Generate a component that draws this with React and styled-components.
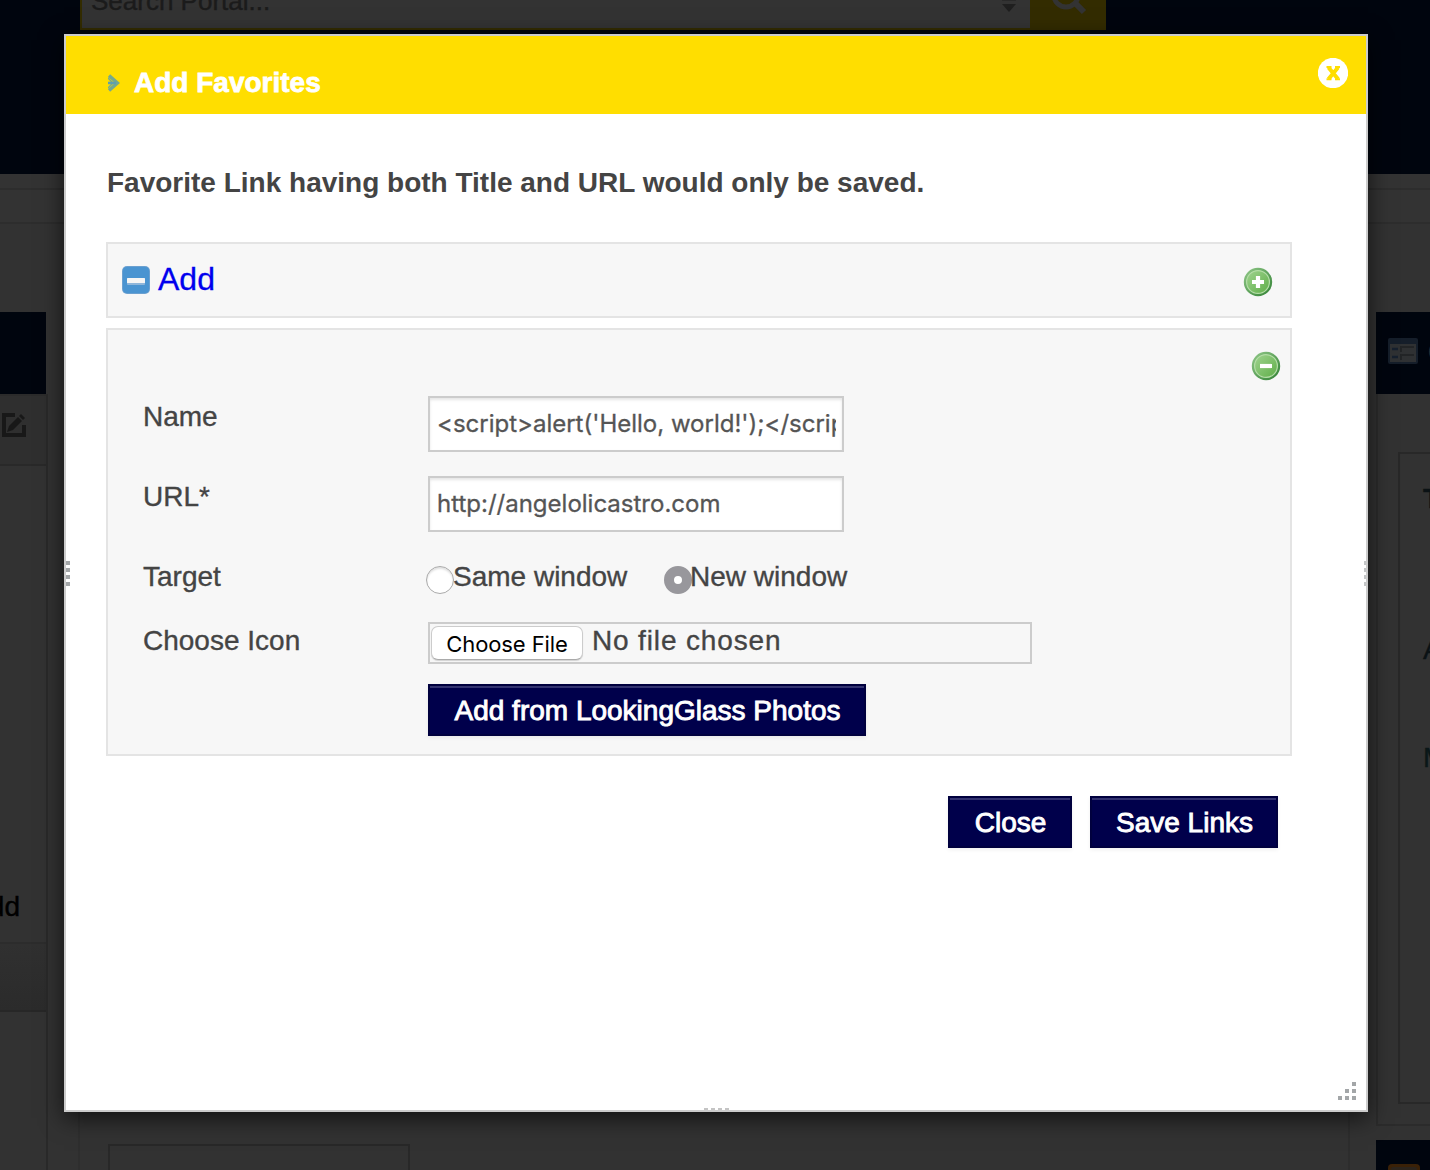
import React from "react";
import styled, { createGlobalStyle } from "styled-components";

const Global = createGlobalStyle`
  * { box-sizing: border-box; }
  body { margin: 0; background: #333; }
  input, button { font: inherit; margin: 0; }
`;

const Page = styled.div`
  position: relative;
  width: 1430px;
  height: 1170px;
  overflow: hidden;
  background: #323232;
  font-family: "Liberation Sans", Arial, sans-serif;
  font-size: 28px;
  color: #444;
`;

/* ---------- dimmed portal ---------- */
const Portal = styled.div`
  display: flex;
  flex-direction: column;
  height: 1170px;
`;
const TopBar = styled.header`
  height: 174px;
  flex: none;
  background: #00050e;
  padding-left: 80px;
  display: flex;
  align-items: flex-start;
`;
const SearchField = styled.div`
  width: 950px;
  height: 30px;
  border: 2px solid #332c00;
  border-top: 0;
  border-right: 0;
  background: #333;
  display: flex;
  justify-content: space-between;
  padding: 0 13px 0 9px;
  color: #1b1b1b;
  span {
    line-height: 32px;
    margin-top: -15px;
    font-size: 26px;
    -webkit-text-stroke: 0.4px #1b1b1b;
  }
  svg { margin-top: 0; }
`;
const SearchButton = styled.div`
  width: 76px;
  height: 30px;
  background: #332c00;
  padding-left: 22px;
  overflow: hidden;
  svg { display: block; margin-top: -22px; }
`;
const Strip = styled.div`
  height: ${(p) => p.h}px;
  flex: none;
  background: ${(p) => p.bg};
  border-bottom: 2px solid #2d2d2d;
`;
const Columns = styled.div`
  flex: 1;
  display: flex;
  min-height: 0;
`;
const LeftColumn = styled.aside`
  width: 48px;
  padding-top: 88px;
  display: flex;
  flex-direction: column;
`;
const LeftHead = styled.div`
  width: 46px;
  height: 82px;
  flex: none;
  background: #00050e;
`;
const LeftCard = styled.div`
  flex: 1;
  border-right: 2px solid #292929;
  border-top: 2px solid #2b2b2b;
  display: flex;
  flex-direction: column;
`;
const EditCell = styled.div`
  height: 70px;
  padding: 17px 0 0 1px;
  background: #2f2f2f;
  border-bottom: 2px solid #292929;
  svg { display: block; }
`;
const AddCell = styled.div`
  height: 478px;
  display: flex;
  align-items: flex-end;
  justify-content: flex-end;
  padding: 0 26px 19px 0;
  overflow: hidden;
  color: #000;
  border-bottom: 2px solid #2c2c2c;
  line-height: 32px;
  -webkit-text-stroke: 0.4px #000;
`;
const ShadeCell = styled.div`
  height: 68px;
  background: linear-gradient(#303030, #2b2b2b);
  border-bottom: 2px solid #272727;
`;
const MiddleColumn = styled.main`
  width: 1272px;
  margin: 0 26px 0 30px;
  border-left: 2px solid #2e2e2e;
  border-right: 2px solid #2d2d2d;
  padding: 920px 0 0 28px;
`;
const MiddleBox = styled.div`
  width: 302px;
  height: 60px;
  border: 2px solid #282828;
`;
const RightColumn = styled.aside`
  width: 54px;
  padding-top: 88px;
  display: flex;
  flex-direction: column;
`;
const RightHead = styled.div`
  height: ${(p) => p.h}px;
  flex: none;
  background: #00050e;
  padding: ${(p) => p.pad};
  display: flex;
  gap: 10px;
  overflow: hidden;
  color: #333;
  font-weight: bold;
  line-height: 28px;
  svg { flex: none; }
`;
const RightCard = styled.div`
  height: 732px;
  margin-bottom: 14px;
  flex: none;
  border-left: 2px solid #2b2b2b;
  border-bottom: 2px solid #2b2b2b;
  padding: 58px 0 20px 20px;
`;
const RightInner = styled.div`
  height: 652px;
  border: 2px solid #282828;
  border-right: 0;
  padding: 27px 0 0 23px;
  overflow: hidden;
  white-space: nowrap;
`;
const Line = styled.div`
  height: ${(p) => p.h}px;
  line-height: 36px;
  font-size: 28px;
  font-weight: ${(p) => (p.bold ? "bold" : "normal")};
  color: ${(p) => p.color || "#0b1215"};
  -webkit-text-stroke: 0.4px currentColor;
`;

/* ---------- dialog ---------- */
const Dialog = styled.section`
  position: absolute;
  left: 64px;
  top: 34px;
  width: 1304px;
  height: 1078px;
  background: #fff;
  border: 2px solid #ccc;
  box-shadow: 0 6px 22px rgba(0, 0, 0, 0.65);
  display: flex;
  flex-direction: column;
`;
const Header = styled.header`
  height: 78px;
  flex: none;
  background: #ffde00;
  display: flex;
  align-items: flex-start;
  padding: 22px 18px 0 42px;
`;
const Chevron = styled.svg`
  width: 12px;
  height: 18px;
  margin-top: 16px;
`;
const Title = styled.h1`
  flex: 1;
  margin: 9px 0 0 14px;
  font-size: 28px;
  line-height: 32px;
  color: #fff;
  -webkit-text-stroke: 0.8px #fff;
`;
const Body = styled.div`
  padding: 53px 74px 0 40px;
  display: flex;
  flex-direction: column;
`;
const Notice = styled.p`
  margin: 0 0 43px;
  padding-left: 1px;
  font-size: 28px;
  line-height: 32px;
  font-weight: bold;
  white-space: nowrap;
`;
const Panel = styled.div`
  background: #f7f7f7;
  border: 2px solid #e4e4e4;
`;
const AddPanel = styled(Panel)`
  height: 76px;
  display: flex;
  justify-content: space-between;
  padding: 14px 17px 0 14px;
  margin-bottom: 10px;
  svg { display: block; margin-top: 9px; }
`;
const AddLink = styled.a`
  display: flex;
  gap: 8px;
  color: #0000ee;
  font-size: 32px;
  line-height: 42px;
  -webkit-text-stroke: 0.3px #0000ee;
  svg { margin-top: 8px; }
`;
const FormPanel = styled(Panel)`
  height: 428px;
  padding: 21px 9px 0 34px;
`;
const RemoveRow = styled.div`
  display: flex;
  justify-content: flex-end;
  height: 45px;
`;
const Row = styled.div`
  display: grid;
  grid-template-columns: 286px 1fr;
  height: ${(p) => p.h}px;
`;
const Label = styled.label`
  line-height: 32px;
  padding: ${(p) => p.pt || 0}px 0 0 1px;
  -webkit-text-stroke: 0.35px #444;
`;
const TextInput = styled.input`
  width: 416px;
  height: 56px;
  border: 2px solid #ccc;
  border-radius: 0;
  padding: 0 6px 2px ${(p) => p.inset}px;
  background: #fff;
  box-shadow: inset 0 2px 3px rgba(0, 0, 0, 0.1);
  font-family: Inter, sans-serif;
  font-size: 24px;
  color: #555;
  -webkit-text-stroke: 0.3px #555;
  outline: 0;
`;
const RadioRow = styled.div`
  display: flex;
  margin-left: -2px;
`;
const RadioOption = styled.label`
  display: flex;
  width: 238px;
  line-height: 32px;
  white-space: nowrap;
  -webkit-text-stroke: 0.35px #444;
`;
const RadioText = styled.span`
  margin: 5px 0 0 ${(p) => p.shift || 0}px;
`;
const RadioDot = styled.span`
  flex: none;
  width: 28px;
  height: 28px;
  margin: 10px -1px 0 0;
  border-radius: 50%;
  border: ${(p) => (p.on ? "10px solid #98979c" : "1px solid #aaa")};
  background: #fff;
  box-shadow: ${(p) => (p.on ? "none" : "inset 0 2px 2px rgba(0,0,0,.12)")};
`;
const FileBox = styled.div`
  width: 604px;
  height: 42px;
  border: 2px solid #ccc;
  display: flex;
  padding: 2px 1px;
`;
const FileButton = styled.span`
  width: 152px;
  height: 34px;
  border: 1px solid #ccc;
  border-bottom-color: #aaa;
  border-radius: 7px;
  background: #fff;
  box-shadow: 0 1px 1px rgba(0, 0, 0, 0.15);
  color: #000;
  font-family: Inter, sans-serif;
  font-size: 22px;
  letter-spacing: -0.1px;
  line-height: 34px;
  text-align: center;
  white-space: nowrap;
`;
const FileText = styled.span`
  margin: -1px 0 0 9px;
  line-height: 32px;
  letter-spacing: 0.85px;
  -webkit-text-stroke: 0.35px #444;
`;
const Button = styled.button`
  width: ${(p) => p.w}px;
  height: 52px;
  border: 2px solid #00003e;
  border-radius: 0;
  background: #00004b;
  box-shadow: inset 0 2px 0 #333370, 0 2px 4px rgba(0, 0, 0, 0.06);
  padding: 2px 0 0 1px;
  color: #fff;
  font-size: 28px;
  line-height: 46px;
  -webkit-text-stroke: 0.9px #fff;
  white-space: nowrap;
`;
const Actions = styled.div`
  display: flex;
  justify-content: flex-end;
  gap: 18px;
  padding: 40px 14px 0 0;
`;
const Grip = styled.svg`
  position: absolute;
  left: ${(p) => p.x}px;
  top: ${(p) => p.y}px;
`;

const RoundIcon = ({ plus }) => (
  <svg width="30" height="30" viewBox="0 0 30 30">
    <defs>
      <linearGradient id={plus ? "gp" : "gm"} x1="0" y1="0" x2="1" y2="1">
        <stop offset="0" stopColor="#93c98a" />
        <stop offset="1" stopColor="#2f8032" />
      </linearGradient>
      <linearGradient id={plus ? "ip" : "im"} x1="0" y1="0" x2="1" y2="1">
        <stop offset="0" stopColor="#9fd38f" />
        <stop offset="1" stopColor="#5fae48" />
      </linearGradient>
    </defs>
    <circle cx="15" cy="15" r="14.2" fill={`url(#${plus ? "gp" : "gm"})`} />
    <circle cx="15" cy="15" r="11.4" fill={`url(#${plus ? "ip" : "im"})`} stroke="#b4dda6" strokeWidth="1.2" />
    <path d={plus ? "M9 15H21M15 9V21" : "M9 15H21"} stroke="#fff" strokeWidth="4.2" />
  </svg>
);

const CollapseIcon = () => (
  <svg width="28" height="28" viewBox="0 0 28 28">
    <rect width="28" height="28" rx="5" fill="#6ba0d0" />
    <rect x="1" y="1" width="26" height="26" rx="4" fill="#4a94d1" />
    <rect x="5" y="15" width="18" height="4" rx="1" fill="#8fb6da" />
    <rect x="5" y="12" width="18" height="5" rx="0.5" fill="#f6f5f4" />
  </svg>
);

const CloseIcon = () => (
  <svg width="30" height="30" viewBox="0 0 30 30">
    <circle cx="15" cy="15" r="15.2" fill="#fff" />
    <path d="M10.5 9.5L20 21M20 9.5L10.5 21" stroke="#ffde00" strokeWidth="4" />
    <path d="M8.5 9H13.5M17 9H22M8.5 21.3H13.5M17 21.3H22" stroke="#ffde00" strokeWidth="2" />
  </svg>
);

const EditIcon = () => (
  <svg width="25" height="25" viewBox="0 0 25 25">
    <path d="M14 2H3V22H23V12" fill="none" stroke="#181818" strokeWidth="4" />
    <path d="M6 19L8 13L17 4L21 8L12 17Z" fill="#181818" />
    <path d="M18 3L20 1L24 5L22 7Z" fill="#181818" />
  </svg>
);

const Dots = ({ points, fill = "#a3a6a8" }) =>
  points.map(([x, y], i) => <rect key={i} x={x} y={y} width="4" height="4" fill={fill} />);

export default function App() {
  return (
    <Page>
      <Global />
      <Portal>
        <TopBar>
          <SearchField>
            <span>Search Portal...</span>
            <svg width="16" height="14"><path d="M1 0H15" stroke="#292929" strokeWidth="2" /><path d="M1 4H15L8 12Z" fill="#1f1f1f" /></svg>
          </SearchField>
          <SearchButton>
            <svg width="40" height="40" viewBox="0 0 40 40">
              <circle cx="14" cy="17" r="12" fill="none" stroke="#333" strokeWidth="5" />
              <path d="M22 24L32 34" stroke="#333" strokeWidth="6" />
            </svg>
          </SearchButton>
        </TopBar>
        <Strip h={16} bg="#333" />
        <Strip h={34} bg="#333" />
        <Columns>
          <LeftColumn>
            <LeftHead />
            <LeftCard>
              <EditCell><EditIcon /></EditCell>
              <AddCell>Add</AddCell>
              <ShadeCell />
            </LeftCard>
          </LeftColumn>
          <MiddleColumn><MiddleBox /></MiddleColumn>
          <RightColumn>
            <RightHead h={82} pad="26px 0 0 12px">
              <svg width="30" height="26" viewBox="0 0 30 26">
                <rect width="30" height="26" rx="2" fill="#151e2a" />
                <rect x="2" y="6" width="26" height="18" fill="#2f3133" />
                <path d="M4 11H10M4 19H10" stroke="#16202e" strokeWidth="2.5" />
                <path d="M13 14V9H26M13 22V17H26" fill="none" stroke="#222426" strokeWidth="2" />
              </svg>
              <span>Quick</span>
            </RightHead>
            <RightCard>
              <RightInner>
                <Line h={151} bold>To</Line>
                <Line h={108}>A</Line>
                <Line h={40} color="#0a1718">My</Line>
              </RightInner>
            </RightCard>
            <RightHead h={40} pad="24px 0 0 12px">
              <svg width="32" height="20"><rect width="32" height="30" rx="4" fill="#3a2107" /><rect x="3" y="3" width="26" height="20" rx="2" fill="#2c241b" /></svg>
            </RightHead>
          </RightColumn>
        </Columns>
      </Portal>

      <Dialog>
        <Header>
          <Chevron viewBox="0 0 12 18">
            <path d="M1 1.5L9.5 9L1 16.5" fill="none" stroke="#74a98f" strokeWidth="3.4" />
            <path d="M0 4L5 9L0 14" fill="none" stroke="#74a98f" strokeWidth="1.4" />
            <path d="M0 9H8" stroke="#5f9fae" strokeWidth="2.6" />
          </Chevron>
          <Title>Add Favorites</Title>
          <CloseIcon />
        </Header>
        <Body>
          <Notice>Favorite Link having both Title and URL would only be saved.</Notice>
          <AddPanel>
            <AddLink><CollapseIcon />Add</AddLink>
            <RoundIcon plus />
          </AddPanel>
          <FormPanel>
            <RemoveRow><RoundIcon /></RemoveRow>
            <Row h={80}>
              <Label pt={5}>Name</Label>
              <TextInput inset={7} readOnly value="<script>alert('Hello, world!');</script>" />
            </Row>
            <Row h={80}>
              <Label pt={5}>URL*</Label>
              <TextInput inset={7} readOnly value="http://angelolicastro.com" />
            </Row>
            <Row h={66}>
              <Label pt={5}>Target</Label>
              <RadioRow>
                <RadioOption><RadioDot /><RadioText>Same window</RadioText></RadioOption>
                <RadioOption><RadioDot on /><RadioText shift={-1}>New window</RadioText></RadioOption>
              </RadioRow>
            </Row>
            <Row h={62}>
              <Label pt={3}>Choose Icon</Label>
              <FileBox>
                <FileButton>Choose File</FileButton>
                <FileText>No file chosen</FileText>
              </FileBox>
            </Row>
            <Row h={52}>
              <span />
              <Button w={438}>Add from LookingGlass Photos</Button>
            </Row>
          </FormPanel>
          <Actions>
            <Button w={124}>Close</Button>
            <Button w={188}>Save Links</Button>
          </Actions>
        </Body>
        <Grip x={0} y={524} width="4" height="26"><Dots points={[[0, 1], [0, 8], [0, 15], [0, 22]]} /></Grip>
        <Grip x={1298} y={524} width="2" height="26"><Dots points={[[0, 1], [0, 8], [0, 15], [0, 22]]} fill="#c4c6c7" /></Grip>
        <Grip x={638} y={1072} width="26" height="2"><Dots points={[[0, 0], [7, 0], [14, 0], [21, 0]]} fill="#c4c4c4" /></Grip>
        <Grip x={1271} y={1045} width="19" height="19"><Dots points={[[15, 1], [8, 8], [15, 8], [1, 15], [8, 15], [15, 15]]} /></Grip>
      </Dialog>
    </Page>
  );
}
